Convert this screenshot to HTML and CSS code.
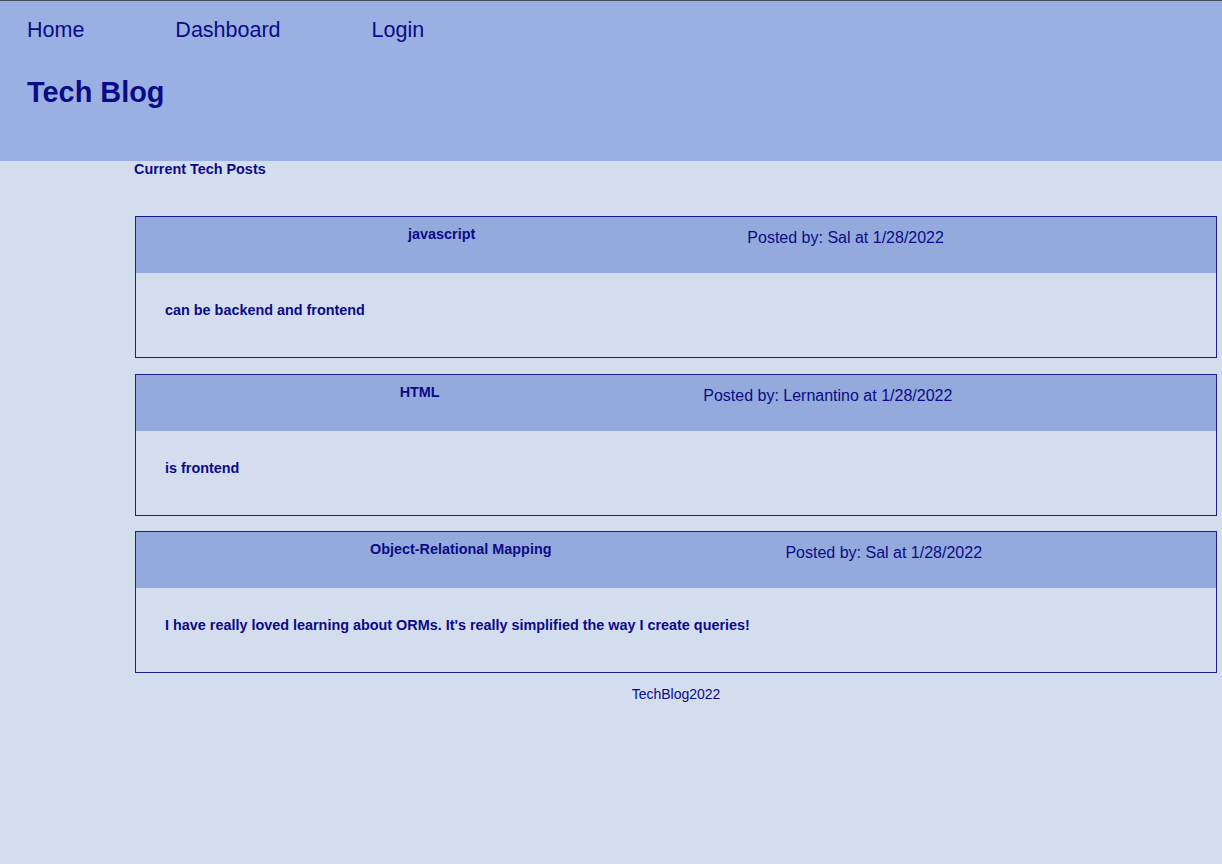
FILE: index.html
```html
<!DOCTYPE html>
<html lang="en">
<head>
<meta charset="utf-8">
<title>Tech Blog</title>
<link rel="stylesheet" href="styles.css">
</head>
<body>
<header class="site-header">
  <nav class="nav">
    <a class="nav-link" href="#">Home</a>
    <a class="nav-link" href="#">Dashboard</a>
    <a class="nav-link" href="#">Login</a>
  </nav>
  <h1 class="site-title">Tech Blog</h1>
</header>
<main class="main">
  <h2 class="section-title">Current Tech Posts</h2>
  <article class="post">
    <div class="post-head">
      <h3 class="post-title">javascript</h3>
      <p class="post-meta">Posted by: Sal at 1/28/2022</p>
    </div>
    <div class="post-body">
      <p class="post-text">can be backend and frontend</p>
    </div>
  </article>
  <article class="post">
    <div class="post-head">
      <h3 class="post-title">HTML</h3>
      <p class="post-meta">Posted by: Lernantino at 1/28/2022</p>
    </div>
    <div class="post-body">
      <p class="post-text">is frontend</p>
    </div>
  </article>
  <article class="post">
    <div class="post-head">
      <h3 class="post-title">Object-Relational Mapping</h3>
      <p class="post-meta">Posted by: Sal at 1/28/2022</p>
    </div>
    <div class="post-body">
      <p class="post-text">I have really loved learning about ORMs. It's really simplified the way I create queries!</p>
    </div>
  </article>
  <footer class="footer">TechBlog2022</footer>
</main>
</body>
</html>
```
FILE: styles.css
```css
* { box-sizing: border-box; }

html, body {
  margin: 0;
  padding: 0;
}

body {
  background: #d4ddee;
  color: #0b0b86;
  font-family: "Liberation Sans", Arial, sans-serif;
  min-height: 864px;
}

.site-header {
  background: #9ab0e2;
  border-top: 1px solid #4a4f60;
  height: 161px;
  padding: 17px 0 0 27px;
}

.nav {
  display: flex;
  gap: 91px;
}

.nav-link {
  color: #0b0b86;
  text-decoration: none;
  font-size: 21.5px;
  line-height: 25px;
}

.site-title {
  margin: 33px 0 0;
  font-size: 28.9px;
  line-height: 32px;
  font-weight: bold;
}

.main {
  padding: 0 5px 0 135px;
}

.section-title {
  margin: 0 0 0 -1px;
  font-size: 14.4px;
  line-height: 16px;
  font-weight: bold;
}

.post {
  margin-top: 15.5px;
  border: 1px solid #1c1c8e;
}

.section-title + .post {
  margin-top: 39px;
}

.post-head {
  height: 56px;
  background: #94aadc;
  display: flex;
  justify-content: space-evenly;
  align-items: flex-start;
  padding-top: 9px;
}

.post-title {
  margin: 0;
  font-size: 14.4px;
  line-height: 16px;
  font-weight: bold;
}

.post-meta {
  margin: 3px 0 0;
  font-size: 16px;
  line-height: 18px;
}

.post-body {
  height: 84px;
  padding: 29px 29px 0;
}

.post-text {
  margin: 0;
  font-size: 14.4px;
  line-height: 16px;
  font-weight: bold;
}

.footer {
  text-align: center;
  font-size: 14px;
  line-height: 16px;
  padding-top: 13px;
}
```
